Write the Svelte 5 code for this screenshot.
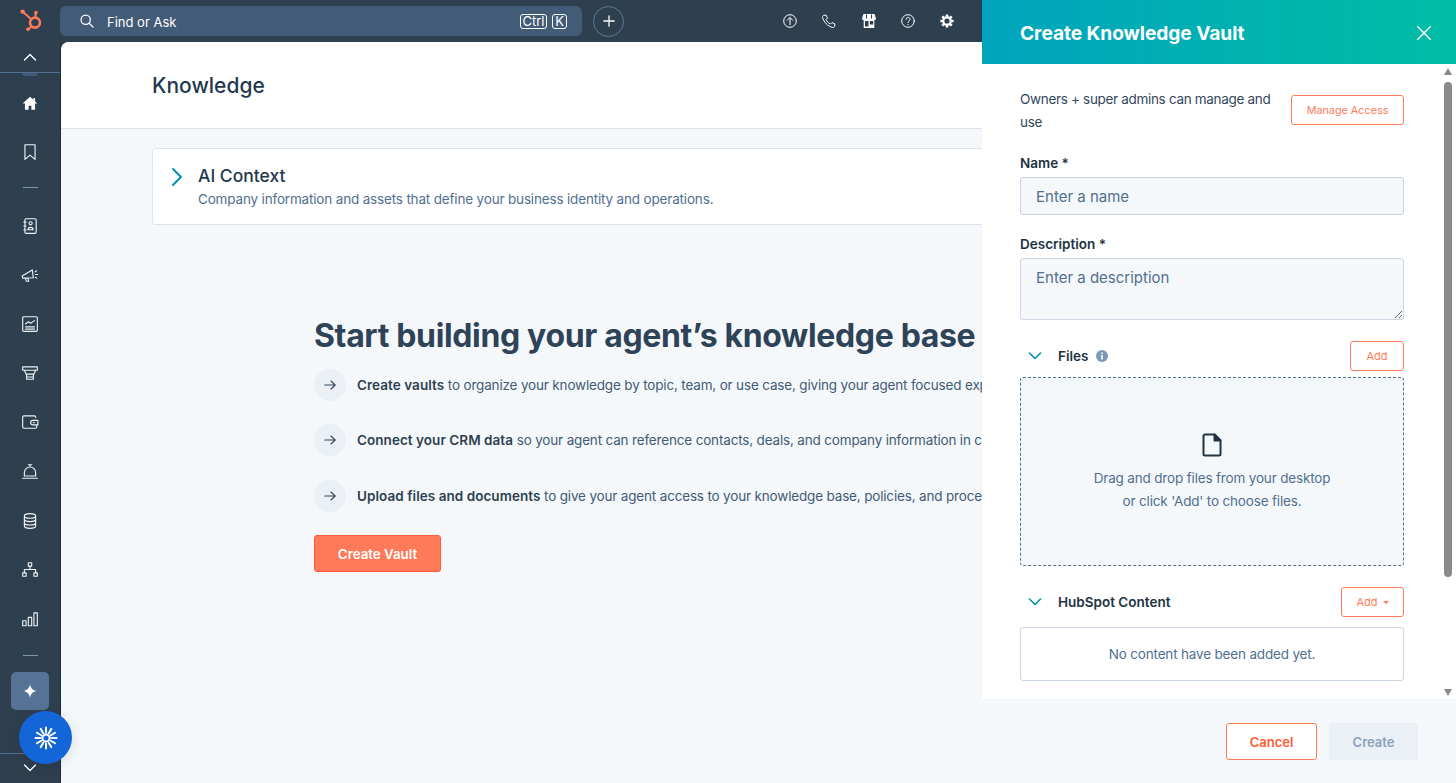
<script>
  const navTop = [
    { id: 'home', path: 'M8 2.500 1.500 8.500h2v5.500h3.300v-3.500h2.400V14h3.300V8.500h2L12.500 6.600V3.500H11v1.700z', fill: true },
    { id: 'bookmark', path: 'M3.500 1.500h9v13L8 10.800l-4.500 3.700z' }
  ];
  const navMain = [
    { id: 'contacts', path: 'M4.500 1.500h8a1 1 0 0 1 1 1v11a1 1 0 0 1-1 1h-8a1 1 0 0 1-1-1v-11a1 1 0 0 1 1-1zM2.500 4.500h2M2.500 8h2M2.500 11.500h2M8.500 4.200a1.400 1.400 0 1 1 0 2.800 1.400 1.400 0 0 1 0-2.800zM6.200 11.300c0-2.800 4.600-2.800 4.600 0z' },
    { id: 'marketing', path: 'M1 8.800l9-5.300 1 7-9.500.3zM4 11l.8 2.600h2l-.5-2.700M12.500 5.200l1.300-1M13 7.500h1.800M12.800 10l1.200.8' },
    { id: 'reports', path: 'M2.500 1.500h11a1 1 0 0 1 1 1v11a1 1 0 0 1-1 1h-11a1 1 0 0 1-1-1v-11a1 1 0 0 1 1-1zM4 8l2.500-2 2 1.300L12 5M4 10.500h8M4 12.500h8' },
    { id: 'commerce', path: 'M1.500 2.500h13v3h-13zM3 5.500l1.500 3.500h7L13 5.500M5 9h6v4.500H5zM5 11.500h6' },
    { id: 'wallet', path: 'M13 4V3.500a1 1 0 0 0-1-1H2.500a1 1 0 0 0-1 1v9a1 1 0 0 0 1 1H13a1 1 0 0 0 1-1V10.500M10.500 6.500h4.500v4h-4.500a2 2 0 0 1 0-4zM11 8.500h.8' },
    { id: 'service', path: 'M8 3.500a5 5 0 0 0-5 5v3h10v-3a5 5 0 0 0-5-5zM6.500 1.500h3M8 1.500v2M1.500 13.500h13' },
    { id: 'data', path: 'M3 3.500c0-2.700 10-2.700 10 0v9c0 2.700-10 2.700-10 0zM3 3.500c0 2.700 10 2.700 10 0M3 6.500c0 2.700 10 2.700 10 0M3 9.500c0 2.700 10 2.700 10 0' },
    { id: 'org', path: 'M6.500 1.500h3v3h-3zM8 4.500v3M3 10.500V7.500h10v3M1.500 10.500h3v3h-3zM11.500 10.500h3v3h-3z' },
    { id: 'bars', path: 'M1.500 9.500h3v4.500h-3zM6.500 6.500h3v7.500h-3zM11.500 2.500h3v11.500h-3z' }
  ];
  const points = [
    { bold: 'Create vaults', rest: ' to organize your knowledge by topic, team, or use case, giving your agent focused expertise.' },
    { bold: 'Connect your CRM data', rest: ' so your agent can reference contacts, deals, and company information in conversations.' },
    { bold: 'Upload files and documents', rest: ' to give your agent access to your knowledge base, policies, and procedures.' }
  ];
  // spokes of the assistant badge
  const spokes = Array.from({ length: 12 }, (_, i) => i * 30);
</script>

{#snippet navIcon(item)}
  <span class="nav-item">
    <svg width="18" height="18" viewBox="0 0 16 16" fill={item.fill ? '#fff' : 'none'} stroke={item.fill ? 'none' : '#eef3f8'} stroke-width="1" stroke-linejoin="round" stroke-linecap="round"><path d={item.path} /></svg>
  </span>
{/snippet}

<div class="shell">
  <header class="topbar">
    <div class="logo">
      <svg width="24" height="24" viewBox="0 0 24 24" fill="none" stroke="#ff7a59" stroke-width="2.200" stroke-linecap="round">
        <circle cx="17" cy="13.600" r="5" stroke-width="2.600" />
        <path d="M17.500 8V4M5 3l8 7M13.500 17.500 10 20.500" stroke-width="2" />
        <circle cx="18" cy="3.600" r="1.800" fill="#ff7a59" stroke="none" />
        <circle cx="4.600" cy="2.600" r="2.200" fill="#ff7a59" stroke="none" />
        <circle cx="10" cy="20.300" r="1.800" fill="#ff7a59" stroke="none" />
      </svg>
    </div>
    <div class="search">
      <svg width="14" height="14" viewBox="0 0 16 16" fill="none" stroke="#fff" stroke-width="1.500" stroke-linecap="round"><circle cx="6.500" cy="6.500" r="5.300" /><path d="m10.500 10.500 4.500 4.500" /></svg>
      <span class="search-text">Find or Ask</span>
      <span class="kbd ctrl">Ctrl</span>
      <span class="kbd">K</span>
    </div>
    <button class="plus" aria-label="Add">
      <svg width="12" height="12" viewBox="0 0 14 14" stroke="#fff" stroke-width="1.500" stroke-linecap="round"><path d="M7 1v12M1 7h12" /></svg>
    </button>
    <div class="top-icons">
      <svg width="14" height="14" viewBox="0 0 14 14" fill="none" stroke="#fff" stroke-width="1"><circle cx="7" cy="7" r="6.300" /><path d="M7 11V3.500M4 6.500l3-3 3 3" /></svg>
      <svg width="14" height="14" viewBox="0 0 14 14" fill="none" stroke="#fff" stroke-width="1" stroke-linejoin="round"><path d="M1.500 1.500 4 1l1.500 3L4 5.500c.8 2 2.500 3.700 4.500 4.500L10 8.500l3 1.500-.5 2.500c-.2.700-1 1.200-1.700 1C6 12.500 1.500 8 .5 3.200c-.2-.7.300-1.500 1-1.700z" /></svg>
      <svg width="14" height="14" viewBox="0 0 14 14" fill="#fff"><path d="M1.500 0h11L14 4.500c0 1-1 1.700-1.700 1.700v7.800H1.700V6.200C1 6.200 0 5.500 0 4.500zM3 7v5.500h3.500V7zm4.800 0v3.500h3.400V7z" /><path d="M4 0.500h1v4H4zM9 .5h1v4H9z" fill="#2e3f50" /></svg>
      <svg width="14" height="14" viewBox="0 0 14 14" fill="none" stroke="#fff" stroke-width="1" stroke-linecap="round"><circle cx="7" cy="7" r="6.300" /><path d="M5 5.300c0-2.500 4-2.500 4 0 0 1.600-2 1.600-2 3.200" /><path d="M7 10.400v.3" /></svg>
      <svg width="14" height="14" viewBox="0 0 14 14" fill="none" stroke="#fff"><circle cx="7" cy="7" r="3.700" stroke-width="2.200" /><path d="M7 .4v3M7 10.600v3M.4 7h3M10.600 7h3M2.300 2.300l2.200 2.200M9.500 9.500l2.200 2.200M11.700 2.300 9.500 4.500M4.500 9.500l-2.200 2.200" stroke-width="2.600" /></svg>
    </div>
  </header>

  <div class="below">
    <nav class="sidebar">
      <span class="nav-chev">
        <svg width="14" height="8" viewBox="0 0 14 8" fill="none" stroke="#fff" stroke-width="1.400" stroke-linecap="round" stroke-linejoin="round"><path d="m1.500 7 5.500-5.500L12.500 7" /></svg>
      </span>
      <div class="rule"></div>
      <div class="nav-group first">
        {#each navTop as item}
          {@render navIcon(item)}
        {/each}
      </div>
      <div class="dash"></div>
      <div class="nav-group">
        {#each navMain as item}
          {@render navIcon(item)}
        {/each}
      </div>
      <div class="dash lower"></div>
      <span class="ai-btn">
        <svg width="16" height="16" viewBox="0 0 16 16" fill="#fff"><path d="M8 1c.6 4 2.500 6.300 7 7-4.500.7-6.400 3-7 7-.6-4-2.500-6.300-7-7 4.500-.7 6.400-3 7-7z" /></svg>
      </span>
      <div class="side-foot">
        <svg width="14" height="8" viewBox="0 0 14 8" fill="none" stroke="#fff" stroke-width="1.400" stroke-linecap="round" stroke-linejoin="round"><path d="m1.500 1 5.500 5.500L12.500 1" /></svg>
      </div>
    </nav>

    <main class="page">
      <div class="page-head"><h1>Knowledge</h1></div>
      <div class="page-body">
        <section class="context">
          <svg width="12" height="20" viewBox="0 0 12 20" fill="none" stroke="#0091ae" stroke-width="2" stroke-linecap="round" stroke-linejoin="round"><path d="m2 2 8 8-8 8" /></svg>
          <div>
            <h2>AI Context</h2>
            <p>Company information and assets that define your business identity and operations.</p>
          </div>
        </section>

        <section class="intro">
          <h3>Start building your agent’s knowledge base</h3>
          <ul>
            {#each points as point}
              <li>
                <span class="arrow">
                  <svg width="12" height="10" viewBox="0 0 12 10" fill="none" stroke="#33475b" stroke-width="1.100" stroke-linecap="round" stroke-linejoin="round"><path d="M.8 5h10.400M7 1l4.200 4L7 9" /></svg>
                </span>
                <span class="point"><strong>{point.bold}</strong>{point.rest}</span>
              </li>
            {/each}
          </ul>
          <button class="primary">Create Vault</button>
        </section>
      </div>
    </main>
  </div>

  <button class="fab" aria-label="Assistant">
    <svg width="24" height="24" viewBox="0 0 24 24" fill="none" stroke="#fff" stroke-linecap="round">
      <circle cx="12" cy="12" r="3.600" stroke-width="2" />
      {#each spokes as angle}
        <path d="M12 6.500V1.500" stroke-width="2" transform="rotate({angle} 12 12)" />
      {/each}
    </svg>
  </button>

  <aside class="panel">
    <div class="panel-head">
      <h2>Create Knowledge Vault</h2>
      <svg width="14" height="14" viewBox="0 0 14 14" stroke="#fff" stroke-width="1.500" stroke-linecap="round"><path d="m.8.800 12.400 12.400M13.200.800.800 13.200" /></svg>
    </div>
    <div class="panel-scroll">
      <div class="panel-body">
        <div class="access">
          <p>Owners + super admins can manage and use</p>
          <button class="ghost manage">Manage Access</button>
        </div>
        <label class="field-label" for="vault-name">Name *</label>
        <input id="vault-name" placeholder="Enter a name" />
        <label class="field-label desc" for="vault-desc">Description *</label>
        <textarea id="vault-desc" placeholder="Enter a description"></textarea>

        <div class="section-row files">
          <svg class="chev" width="14" height="8" viewBox="0 0 14 8" fill="none" stroke="#0091ae" stroke-width="1.600" stroke-linecap="round" stroke-linejoin="round"><path d="m1.500 1 5.500 5.500L12.500 1" /></svg>
          <strong>Files</strong>
          <svg class="info" width="12" height="12" viewBox="0 0 12 12"><circle cx="6" cy="6" r="6" fill="#7c98b6" /><path d="M5.200 5h1.600v4.500H5.200zM5.200 2.500h1.600V4H5.200z" fill="#fff" /></svg>
          <button class="ghost add">Add</button>
        </div>
        <div class="dropzone">
          <svg width="20" height="24" viewBox="0 0 20 24" fill="none" stroke="#213343" stroke-width="2" stroke-linejoin="round"><path d="M3 1.500h9.500l6 6V21a1.500 1.500 0 0 1-1.500 1.500H3A1.500 1.500 0 0 1 1.500 21V3A1.500 1.500 0 0 1 3 1.500z" /><path d="M12.500 1.500v6h6z" fill="#213343" /></svg>
          <p>Drag and drop files from your desktop<br />or click 'Add' to choose files.</p>
        </div>

        <div class="section-row hub">
          <svg class="chev" width="14" height="8" viewBox="0 0 14 8" fill="none" stroke="#0091ae" stroke-width="1.600" stroke-linecap="round" stroke-linejoin="round"><path d="m1.500 1 5.500 5.500L12.500 1" /></svg>
          <strong>HubSpot Content</strong>
          <button class="ghost add caret">Add <i></i></button>
        </div>
        <div class="empty">No content have been added yet.</div>
      </div>
      <div class="scrollbar">
        <i class="up"></i>
        <span class="thumb"></span>
        <i class="down"></i>
      </div>
    </div>
    <div class="panel-foot">
      <button class="ghost cancel">Cancel</button>
      <button class="create">Create</button>
    </div>
  </aside>
</div>

<style>
  :global(body) {
    margin: 0;
    font-family: Inter, "Noto Sans", sans-serif;
    color: #33475b;
    overflow: hidden;
  }

  button {
    font-family: inherit;
    cursor: pointer;
  }

  .shell {
    position: relative;
    width: 1456px;
    height: 783px;
    overflow: hidden;
    background: #2e3f50;
    display: flex;
    flex-direction: column;
  }

  .topbar {
    height: 42px;
    flex-shrink: 0;
    display: flex;
    align-items: center;
  }

  .logo {
    width: 60px;
    display: flex;
    justify-content: center;
  }

  .search {
    width: 522px;
    height: 30px;
    box-sizing: border-box;
    padding: 0 15px 0 20px;
    display: flex;
    align-items: center;
    gap: 3px;
    background: #425b76;
    border-radius: 6px;
    color: #fff;
  }

  .search-text {
    flex: 1;
    font-size: 13px;
    margin-left: 10px;
    padding-top: 2px;
  }

  .kbd {
    width: 15px;
    height: 15px;
    box-sizing: border-box;
    margin-left: 2px;
    text-align: center;
    border: 1px solid #fff;
    border-radius: 3px;
    font-size: 13px;
    line-height: 13px;
  }

  .kbd.ctrl {
    width: 27px;
  }

  .plus {
    width: 31px;
    height: 31px;
    margin-left: 11px;
    padding: 0;
    background: none;
    border: 1px solid #5e7b99;
    border-radius: 50%;
    display: flex;
    align-items: center;
    justify-content: center;
  }

  .top-icons {
    margin-left: 159px;
    display: flex;
    gap: 25.250px;
  }

  .below {
    flex: 1;
    display: flex;
    min-height: 0;
  }

  .sidebar {
    width: 60px;
    flex-shrink: 0;
    display: flex;
    flex-direction: column;
    align-items: center;
    border-right: 1px solid #1f2d3b;
  }

  .nav-chev {
    height: 30px;
    display: flex;
    align-items: center;
  }

  .rule {
    position: relative;
    align-self: stretch;
    height: 1px;
    background: #516f90;
  }

  .rule::after {
    content: '';
    position: absolute;
    top: 1px;
    left: 22px;
    width: 16px;
    height: 3px;
    background: #3f5a76;
    border-radius: 0 0 8px 8px;
  }

  .nav-group {
    display: flex;
    flex-direction: column;
    align-items: center;
  }

  .nav-group.first {
    margin-top: 5.500px;
  }

  .nav-item {
    height: 49.200px;
    width: 60px;
    display: flex;
    align-items: center;
    justify-content: center;
  }

  .dash {
    width: 15px;
    height: 1px;
    flex-shrink: 0;
    background: #7c98b6;
    margin: 10.600px 0 12.500px;
  }

  .dash.lower {
    margin: 11.700px 0 16px;
  }

  .ai-btn {
    width: 38px;
    height: 38px;
    flex-shrink: 0;
    background: #567395;
    border-radius: 5px;
    display: flex;
    align-items: center;
    justify-content: center;
  }

  .side-foot {
    margin-top: auto;
    align-self: stretch;
    height: 30px;
    box-sizing: border-box;
    padding-bottom: 1px;
    border-top: 1px solid #516f90;
    display: flex;
    justify-content: center;
    align-items: center;
  }

  .page {
    flex: 1;
    min-width: 0;
    background: #f5f8fa;
    border-top-left-radius: 8px;
    overflow: hidden;
  }

  .page-head {
    height: 87px;
    box-sizing: border-box;
    background: #fff;
    border-bottom: 1px solid #dfe3eb;
    padding-left: 91px;
    display: flex;
    align-items: center;
  }

  h1 {
    margin: 0;
    font-size: 21px;
    font-weight: 500;
    color: #23384e;
  }

  .page-body {
    padding: 19px 0 0 91px;
  }

  .context {
    width: 1100px;
    height: 77px;
    box-sizing: border-box;
    display: flex;
    align-items: flex-start;
    gap: 15px;
    padding: 16px 18px 0;
    background: #fff;
    border: 1px solid #dfe3eb;
    border-radius: 3px;
  }

  .context svg {
    margin-top: 2px;
    flex-shrink: 0;
  }

  .context h2 {
    margin: 0 0 3.500px;
    font-size: 17.500px;
    line-height: 22px;
    font-weight: 500;
    color: #23384e;
  }

  .context p {
    margin: 0;
    font-size: 13.500px;
    letter-spacing: -0.170px;
    color: #516f90;
  }

  .intro {
    margin: 91px 0 0 162px;
    white-space: nowrap;
  }

  h3 {
    margin: 0;
    font-size: 32px;
    line-height: 40px;
    font-weight: 700;
    letter-spacing: -0.350px;
    color: #2e4258;
  }

  ul {
    list-style: none;
    margin: 12.500px 0 0;
    padding: 0;
  }

  li {
    display: flex;
    align-items: center;
    gap: 11px;
    height: 32px;
    margin-bottom: 23.500px;
    font-size: 13.500px;
    letter-spacing: -0.170px;
    color: #425b76;
  }

  li strong {
    font-weight: 600;
    letter-spacing: 0.050px;
    color: #2e3f50;
  }

  .arrow {
    width: 32px;
    height: 32px;
    flex-shrink: 0;
    border-radius: 50%;
    background: #eaf0f6;
    display: flex;
    align-items: center;
    justify-content: center;
  }

  .primary {
    display: block;
    width: 127px;
    height: 37px;
    margin-top: 5.500px;
    padding: 0;
    background: #ff7a59;
    border: 1px solid #ff5c35;
    border-radius: 3px;
    color: #fff;
    font-size: 13.300px;
    font-weight: 600;
  }

  .fab {
    position: absolute;
    left: 19px;
    top: 711px;
    width: 53px;
    height: 53px;
    padding: 0;
    border: none;
    border-radius: 50%;
    background: #1465d8;
    box-shadow: 0 2px 14px rgba(0, 0, 0, 0.12);
    display: flex;
    align-items: center;
    justify-content: center;
  }

  .panel {
    position: absolute;
    top: 0;
    right: 0;
    bottom: 0;
    width: 474px;
    display: flex;
    flex-direction: column;
    background: #fff;
  }

  .panel-head {
    height: 64px;
    flex-shrink: 0;
    box-sizing: border-box;
    padding: 2px 25px 0 38px;
    display: flex;
    align-items: center;
    justify-content: space-between;
    background: linear-gradient(90deg, #00a4bd, #00bda5);
    color: #fff;
  }

  .panel-head h2 {
    margin: 0;
    font-size: 19.200px;
    font-weight: 700;
    letter-spacing: -0.080px;
  }

  .panel-scroll {
    flex: 1;
    min-height: 0;
    display: flex;
    overflow: hidden;
  }

  .panel-body {
    flex: 1;
    min-width: 0;
    padding: 24px 0 0 38px;
    box-sizing: border-box;
  }

  .access {
    width: 384px;
    display: flex;
    align-items: flex-start;
    justify-content: space-between;
    gap: 16px;
  }

  .access p {
    margin: 0;
    width: 258px;
    font-size: 13.500px;
    letter-spacing: -0.320px;
    line-height: 23px;
    color: #33475b;
  }

  .ghost {
    background: #fff;
    border: 1px solid #ff7a59;
    border-radius: 3px;
    color: #ff7a59;
    padding: 0;
  }

  .manage {
    width: 113px;
    height: 30px;
    margin-top: 7px;
    font-size: 10.800px;
    flex-shrink: 0;
  }

  .field-label {
    display: block;
    font-size: 13.500px;
    line-height: 18px;
    font-weight: 600;
    color: #213343;
    margin-top: 20px;
    margin-bottom: 5px;
  }

  .field-label.desc {
    margin-top: 20px;
  }

  input, textarea {
    display: block;
    width: 384px;
    box-sizing: border-box;
    margin: 0;
    background: #f5f8fa;
    border: 1px solid #cbd6e2;
    border-radius: 3px;
    padding: 0 15px;
    font-family: inherit;
    font-size: 15px;
    color: #33475b;
  }

  input {
    height: 38px;
  }

  textarea {
    height: 62px;
    padding-top: 9px;
    line-height: 20px;
  }

  input::placeholder, textarea::placeholder {
    color: #516f90;
    opacity: 1;
  }

  .section-row {
    width: 384px;
    display: flex;
    align-items: center;
    font-size: 13.500px;
    color: #213343;
  }

  .section-row strong {
    font-weight: 600;
  }

  .chev {
    margin: 0 16px 0 8px;
  }

  .info {
    margin-left: 8px;
  }

  .section-row.files {
    margin-top: 21px;
    margin-bottom: 6px;
  }

  .section-row.hub {
    margin-top: 21px;
    margin-bottom: 10px;
  }

  .add {
    margin-left: auto;
    width: 54px;
    height: 30px;
    font-size: 11px;
  }

  .add.caret {
    width: 63px;
  }

  .add i {
    display: inline-block;
    margin-left: 2px;
    vertical-align: 2px;
    border: 3px solid transparent;
    border-top-color: #ff7a59;
    border-bottom: 0;
  }

  .dropzone {
    width: 384px;
    height: 189px;
    box-sizing: border-box;
    background: #f5f8fa;
    border: 1px dashed #516f90;
    border-radius: 3px;
    padding-top: 55px;
    text-align: center;
  }

  .dropzone svg {
    display: block;
    margin: 0 auto;
  }

  .dropzone p {
    margin: 10px 0 0;
    font-size: 13.500px;
    letter-spacing: -0.170px;
    line-height: 23px;
    color: #516f90;
  }

  .empty {
    width: 384px;
    height: 54px;
    box-sizing: border-box;
    border: 1px solid #cbd6e2;
    border-radius: 3px;
    display: flex;
    align-items: center;
    justify-content: center;
    font-size: 13.500px;
    letter-spacing: -0.170px;
    color: #516f90;
  }

  .scrollbar {
    width: 17px;
    flex-shrink: 0;
    display: flex;
    flex-direction: column;
    align-items: center;
    padding-top: 4px;
    box-sizing: border-box;
  }

  .scrollbar .up, .scrollbar .down {
    display: block;
    border: 4.500px solid transparent;
    flex-shrink: 0;
  }

  .scrollbar .up {
    border-bottom: 7px solid #8a8a8a;
    border-top: 0;
  }

  .scrollbar .down {
    margin-top: auto;
    margin-bottom: 3px;
    border-top: 7px solid #8a8a8a;
    border-bottom: 0;
  }

  .thumb {
    width: 8px;
    height: 495px;
    margin-top: 7px;
    border-radius: 4px;
    background: #8a8a8a;
  }

  .panel-foot {
    height: 84px;
    flex-shrink: 0;
    box-sizing: border-box;
    background: #f5f8fa;
    padding: 24px 38px 0 0;
    display: flex;
    justify-content: flex-end;
    gap: 12px;
  }

  .cancel {
    width: 91px;
    height: 37px;
    font-size: 13px;
    font-weight: 600;
    color: #ff5c35;
  }

  .create {
    width: 89px;
    height: 37px;
    padding: 0;
    border: none;
    border-radius: 3px;
    background: #eaf0f6;
    color: #8ba2bc;
    font-size: 13px;
    font-weight: 600;
  }
</style>
